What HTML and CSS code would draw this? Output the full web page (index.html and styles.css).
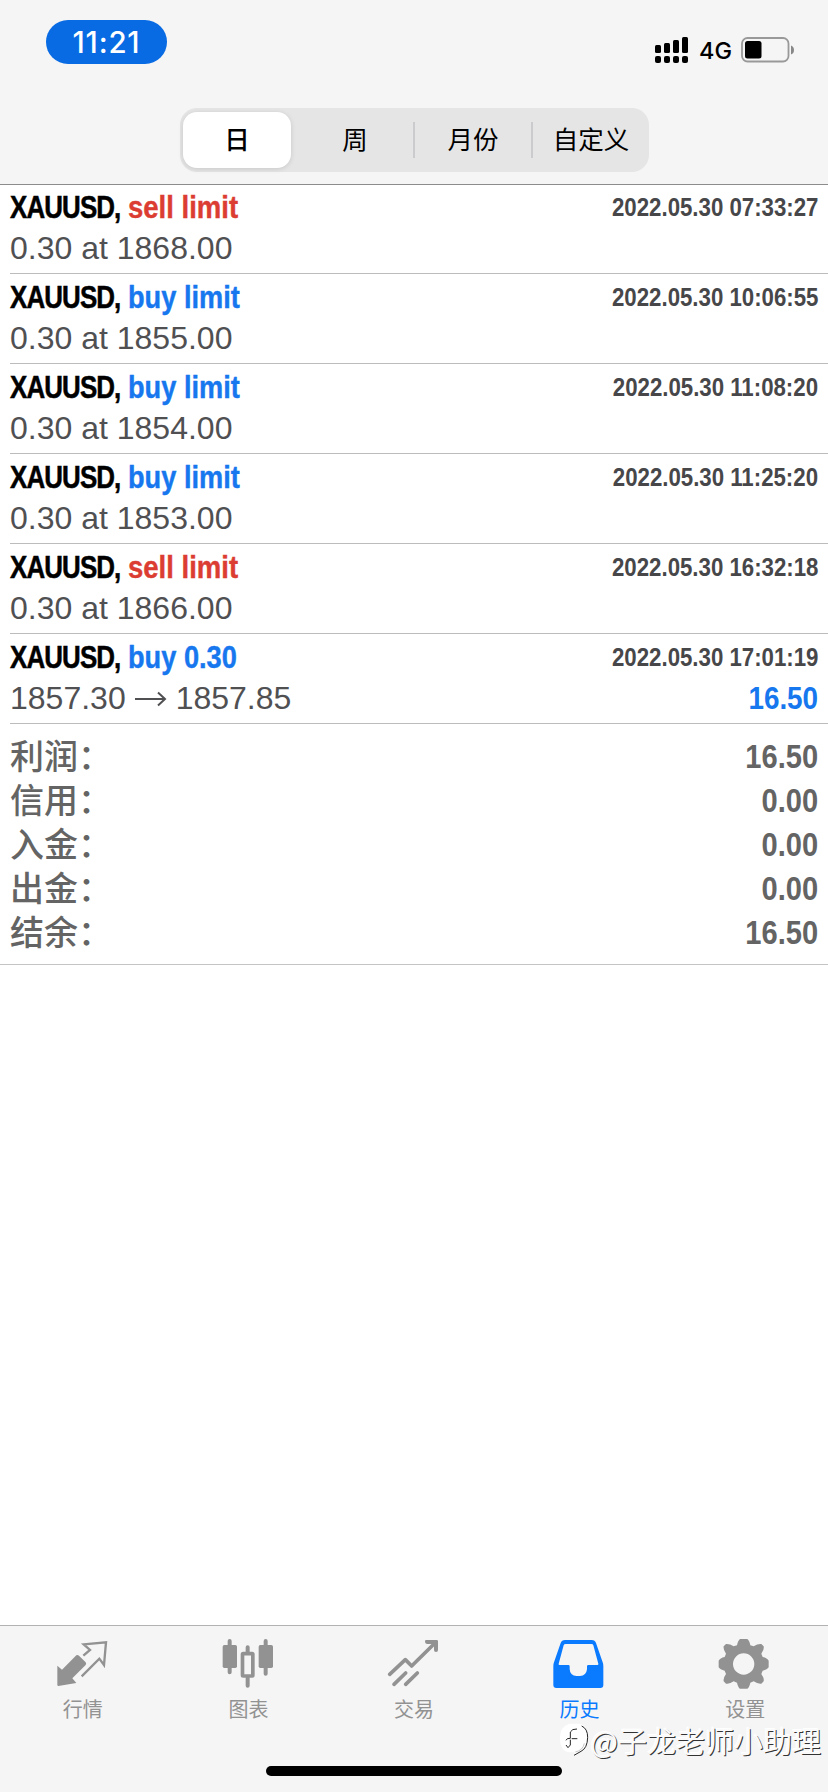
FILE: index.html
```html
<!DOCTYPE html>
<html lang="zh-CN">
<head>
<meta charset="utf-8">
<title>历史</title>
<link rel="stylesheet" href="styles.css">
</head>
<body>
<div class="screen">
  <header class="top">
    <div class="status">
      <span class="clock">11:21</span>
      <div class="signals">
        <svg class="bars" width="34" height="28" viewBox="0 0 34 28"><g><rect x="0" y="9" width="6" height="8" rx="1.5"/><rect x="9" y="7" width="6" height="10" rx="1.5"/><rect x="18" y="4" width="6" height="13" rx="1.5"/><rect x="27" y="1" width="6" height="16" rx="1.5"/><rect x="0" y="20" width="6" height="7" rx="2"/><rect x="9" y="20" width="6" height="7" rx="2"/><rect x="18" y="20" width="6" height="7" rx="2"/><rect x="27" y="20" width="6" height="7" rx="2"/></g></svg>
        <span class="net">4G</span>
        <svg class="battery" width="54" height="26" viewBox="0 0 54 26"><rect x="1" y="1" width="46.500" height="23.500" rx="5.500" fill="none" stroke="#999" stroke-width="1.800"/><rect x="4" y="4" width="16.500" height="17.500" rx="2.500"/><path d="M50 8.500Q53 9.500 53 13Q53 16.500 50 17.500Z" fill="#888"/></svg>
      </div>
    </div>
    <nav class="segments">
      <span class="seg on">日</span><span class="seg">周</span><span class="seg split">月份</span><span class="seg split">自定义</span>
    </nav>
  </header>

  <main class="list">
    <section class="row"><div class="line"><span class="sym"><b>XAUUSD,</b></span><span class="kind sell">sell limit</span><span class="date">2022.05.30 07:33:27</span></div><div class="line"><span class="price">0.30 at 1868.00</span></div></section>
    <section class="row"><div class="line"><span class="sym"><b>XAUUSD,</b></span><span class="kind">buy limit</span><span class="date">2022.05.30 10:06:55</span></div><div class="line"><span class="price">0.30 at 1855.00</span></div></section>
    <section class="row"><div class="line"><span class="sym"><b>XAUUSD,</b></span><span class="kind">buy limit</span><span class="date">2022.05.30 11:08:20</span></div><div class="line"><span class="price">0.30 at 1854.00</span></div></section>
    <section class="row"><div class="line"><span class="sym"><b>XAUUSD,</b></span><span class="kind">buy limit</span><span class="date">2022.05.30 11:25:20</span></div><div class="line"><span class="price">0.30 at 1853.00</span></div></section>
    <section class="row"><div class="line"><span class="sym"><b>XAUUSD,</b></span><span class="kind sell">sell limit</span><span class="date">2022.05.30 16:32:18</span></div><div class="line"><span class="price">0.30 at 1866.00</span></div></section>
    <section class="row"><div class="line"><span class="sym"><b>XAUUSD,</b></span><span class="kind">buy 0.30</span><span class="date">2022.05.30 17:01:19</span></div><div class="line"><span class="price">1857.30</span><svg class="arrow" width="32" height="16" viewBox="0 0 32 16"><path d="M0 8H30M23 1.500L30 8L23 14.500"/></svg><span class="price">1857.85</span><span class="gain">16.50</span></div></section>
  </main>

  <section class="summary">
    <div class="sum"><span>利润：</span><b>16.50</b></div>
    <div class="sum"><span>信用：</span><b>0.00</b></div>
    <div class="sum"><span>入金：</span><b>0.00</b></div>
    <div class="sum"><span>出金：</span><b>0.00</b></div>
    <div class="sum"><span>结余：</span><b>16.50</b></div>
  </section>

  <footer class="bottom">
    <nav class="tabs">
      <div class="tab">
        <svg class="icon" viewBox="158 63 180 168"><path class="fill" d="M228 121Q232 118 236 122L256 142Q259 146 256 150L216 190L228 204L174 213Q171 213 171 209V152L185 164Z"/><path class="stroke" stroke-width="7" d="M249 122L269 105L250 88L317 82L311 150L297 131L244 184"/></svg>
        <span>行情</span>
      </div>
      <div class="tab">
        <svg class="icon" viewBox="655 63 180 168"><path class="stroke round" stroke-width="12" d="M690 78V172M798 78V176M744 97V114M744 188V212"/><rect class="fill" x="669" y="90" width="43" height="69" rx="5"/><rect class="fill" x="777" y="90" width="43" height="69" rx="5"/><rect class="stroke" x="728.500" y="116" width="31" height="67" rx="2" stroke-width="11"/></svg>
        <span>图表</span>
      </div>
      <div class="tab">
        <svg class="icon" viewBox="282 63 180 168"><path class="stroke round" stroke-width="11" d="M299 178L346 134L365 153L435 84M312 208L347 174M347 208L382 174"/><path class="fill" d="M407 75H440Q444 75 444 79V105Q444 111 438 111Q432 111 432 105V87H411Q405 86 405 80Q405 76 407 75Z"/></svg>
        <span>交易</span>
      </div>
      <div class="tab current">
        <svg class="icon" viewBox="59 63 180 168"><path class="fill" fill-rule="evenodd" d="M104 75H184Q194 75 197 84L217 142Q219 147 219 153V210Q219 219 210 219H78Q69 219 69 210V153Q69 147 71 142L91 84Q94 75 104 75ZM106 87Q101 87 100 91L85 146Q84 150 88 150H114Q118 150 118 154V163Q119 182 139 183H149Q168 182 170 163V154Q170 150 174 150H201Q205 150 204 146L189 91Q188 87 183 87Z"/></svg>
        <span>历史</span>
      </div>
      <div class="tab">
        <svg class="icon" viewBox="556 63 180 168"><path class="fill" fill-rule="evenodd" d="M631 72H653Q659 76 662 91L672 94Q684 86 695 87L702 94Q704 104 695 116L699 126Q713 129 717 137V157Q713 164 699 167L695 177Q704 189 702 199L695 206Q685 208 672 199L662 203Q659 217 653 221H631Q625 217 622 203L612 199Q600 208 589 206L582 199Q580 189 589 177L585 167Q571 164 567 157V137Q571 129 585 126L589 116Q580 104 582 94L589 87Q600 86 612 94L622 91Q625 76 631 72ZM642 115A32 32 0 1 0 642 179A32 32 0 1 0 642 115Z"/></svg>
        <span>设置</span>
      </div>
    </nav>
    <div class="home"></div>
  </footer>

  <div class="credit">
    <svg width="32" height="34" viewBox="77 336 96 102"><path d="M108 338H138Q163 342 163 378Q163 411 148 419Q134 425 124 433L123 424H108Q80 420 80 381Q80 346 108 338Z" fill="#fff"/><path d="M98 388L102 383L111 382V363Q116 353 131 354M115 383H132M111 386V402L104 410L98 402M145 345Q163 353 163 379Q162 412 143 421L122 433" fill="none" stroke="#252525" stroke-width="3"/><path d="M126 423Q149 418 153 397" fill="none" stroke="#aaa" stroke-width="2"/></svg>
    <span>@子龙老师小助理</span>
  </div>
</div>
</body>
</html>
```
FILE: styles.css
```css
* { box-sizing: border-box; }
body {
  margin: 0;
  background: #fff;
  font-family: "Liberation Sans", "Noto Sans CJK SC", sans-serif;
}
.screen {
  position: relative;
  display: flex;
  flex-direction: column;
  width: 828px;
  height: 1792px;
  overflow: hidden;
}
svg { display: block; flex: none; }

/* Status bar and period switch */
.top {
  height: 185px;
  background: #f5f5f5;
  border-bottom: 1px solid #8c8c8c;
}
.status {
  display: flex;
  justify-content: space-between;
  align-items: flex-start;
  height: 108px;
  padding: 20px 33px 0 46px;
}
.clock {
  width: 121px;
  height: 44px;
  border-radius: 22px;
  background: #086be4;
  color: #fff;
  font: 500 29.5px/45px Inter, sans-serif;
  letter-spacing: .8px;
  text-align: center;
}
.signals { display: flex; padding-top: 16px; }
.net {
  width: 32px;
  margin: 0 10px;
  font: 500 23.5px/29px Inter, sans-serif;
  white-space: nowrap;
}
.battery { margin-top: 1px; }
.segments {
  display: flex;
  width: 469px;
  height: 64px;
  margin-left: 180px;
  padding: 4px 0 4px 3px;
  border-radius: 17px;
  background: #e5e5e6;
  font: 400 25.5px/52px "Noto Sans CJK SC", sans-serif;
}
.seg {
  display: flex;
  justify-content: center;
  width: 118px;
  padding-left: 2px;
}
.seg.on {
  width: 108px;
  margin-right: 4px;
  padding-left: 0;
  border-radius: 14px;
  background: #fff;
  box-shadow: 0 1px 5px rgba(0, 0, 0, .13);
  font-weight: 500;
}
.seg.split {
  background: linear-gradient(#cbcbcd, #cbcbcd) 0 50% / 2px 36px no-repeat;
}

/* History rows */
.list { padding-left: 10px; }
.row {
  height: 90px;
  padding: 2px 10px 0 0;
  border-bottom: 1px solid #bcbcbe;
}
.row:first-child { height: 89px; }
.line { display: flex; height: 41px; line-height: 41px; font-size: 32px; white-space: nowrap; }
.row:not(:first-child) { padding-top: 3px; }
.sym { width: 118px; }
.sym b, .kind, .date, .gain, .sum b { display: inline-block; font-weight: 700; }
.sym b {
  transform: scaleX(.81);
  transform-origin: 0 50%;
  letter-spacing: -1.1px;
  color: #000;
  -webkit-text-stroke: .5px #000;
}
.kind { transform: scaleX(.85); transform-origin: 0 50%; color: #1777ee; -webkit-text-stroke: .4px currentColor; }
.kind.sell { transform: scaleX(.86); color: #dc3d32; }
.date, .gain, .sum b { margin-left: auto; transform: scaleX(.855); transform-origin: 100% 50%; }
.date { color: #47474a; font-size: 26px; }
.gain { transform: scaleX(.87); color: #1777ee; }
.price { color: #505053; }
.arrow {
  margin: 13px 9px 0 9px;
  fill: none;
  stroke: #505053;
  stroke-width: 2;
}

/* Totals */
.summary {
  height: 241px;
  padding: 10px 10px 0;
  border-bottom: 1px solid #c4c4c4;
}
.sum {
  display: flex;
  height: 44px;
  line-height: 44px;
  color: #646464;
  font-size: 34px;
}
.sum span { font: 500 34px/42px "Noto Sans CJK SC", sans-serif; height: 42px; }

/* Tab bar */
.bottom {
  height: 167px;
  margin-top: auto;
  background: #f5f5f5;
  border-top: 1px solid #b2b2b2;
}
.tabs { display: grid; grid-template-columns: repeat(5, 1fr); height: 140px; }
.tab {
  display: flex;
  flex-direction: column;
  align-items: center;
  padding-top: 10px;
  color: #929292;
  font: 400 20px/33px "Noto Sans CJK SC", sans-serif;
}
.tab.current { color: #0a7aff; }
.icon { width: 60px; height: 56px; }
.fill { fill: currentColor; }
.stroke { fill: none; stroke: currentColor; }
.round { stroke-linecap: round; stroke-linejoin: round; }
.home {
  width: 296px;
  height: 10px;
  margin: 0 auto;
  border-radius: 5px;
  background: #000;
}

/* Author credit laid over the tab bar */
.credit {
  position: absolute;
  right: 7px;
  bottom: 32px;
  display: flex;
  align-items: center;
  color: #fafafa;
  font: 400 29px/40px "Noto Sans CJK SC", sans-serif;
  text-shadow: 1px 1px 0 #333, -1px -1px 0 #fff;
}
```
